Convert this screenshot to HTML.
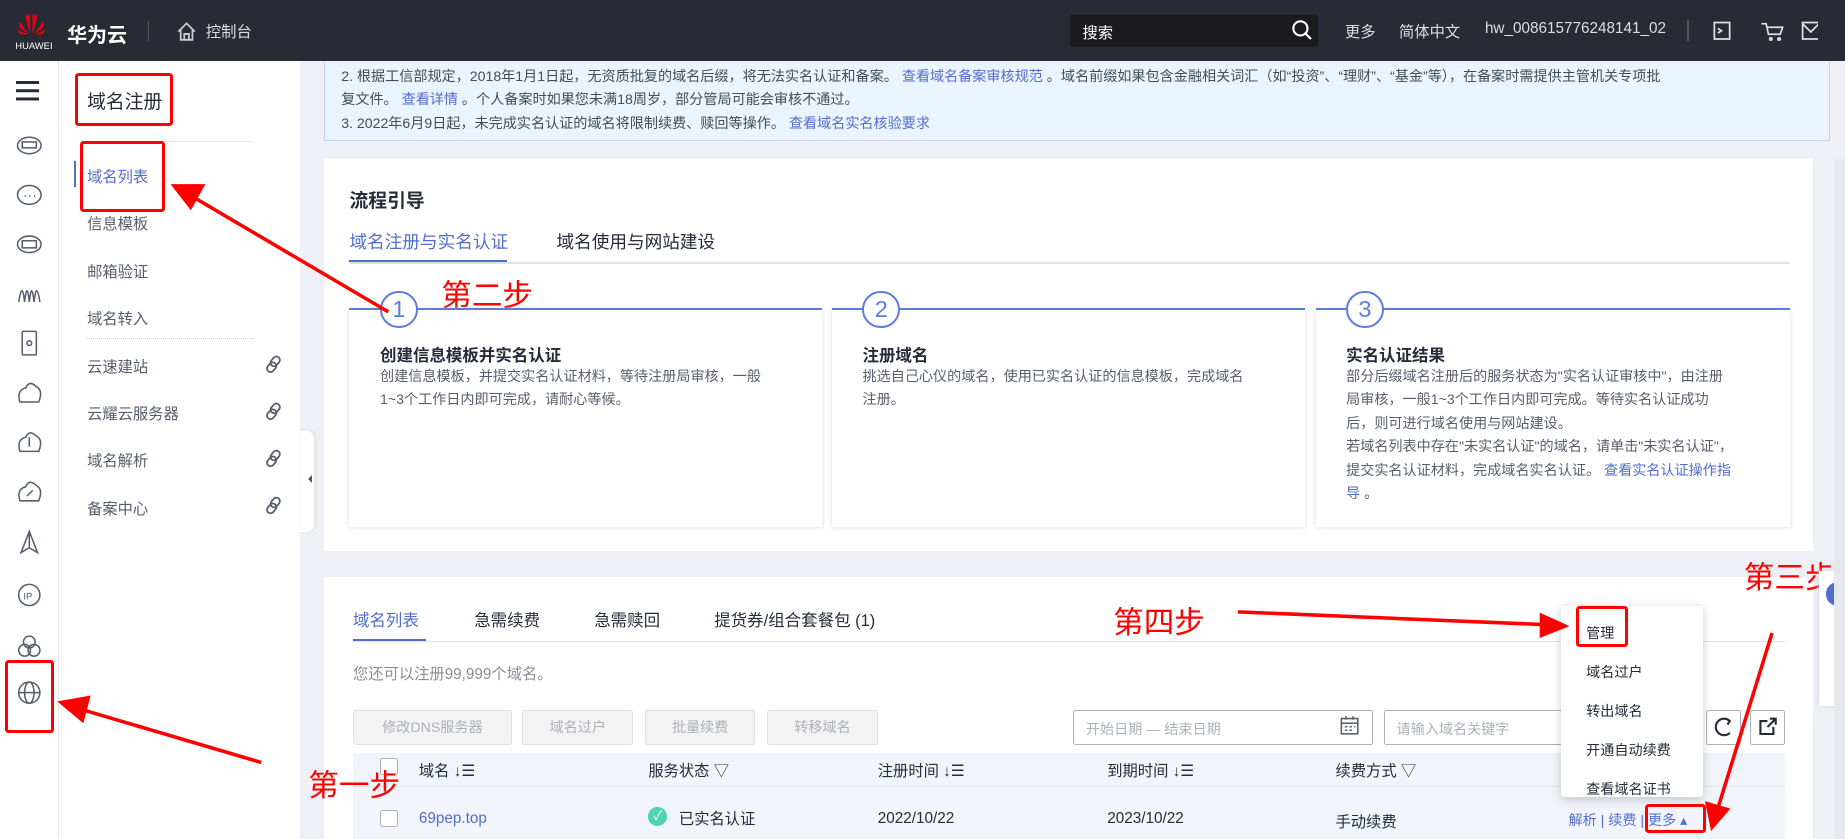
<!DOCTYPE html>
<html><head><meta charset="utf-8"><style>
*{margin:0;padding:0;box-sizing:border-box}
html,body{width:1845px;height:839px;overflow:hidden;background:#eef0f5}
#w{zoom:1.17666;position:relative;width:1568px;height:713px;font-family:"Liberation Sans","Noto Sans CJK SC",sans-serif;font-size:13px;color:#252b3a}
.a{position:absolute;white-space:nowrap}
.top{left:0;top:0;width:1568px;height:52px;background:#282b33;color:#fff}
.blue{color:#526ecc}
.g{color:#575d6c}
.red{color:#f00;font-size:26px}
.rb{border:3px solid #f00;border-radius:3px}
.btn{height:30px;border:1px solid #dfe1e6;background:#f3f3f3;color:#adb0b8;text-align:center;line-height:28px;font-size:12px;border-radius:2px}
.th{top:645px;font-size:13px;color:#252b3a}
</style></head><body><div id="w">
<div class="a top">
 <svg class="a" style="left:14px;top:10px" width="26" height="20" viewBox="0 0 26 20"><g fill="#e60012"><path d="M12 19 L8 4 Q10 1 12 3Z"/><path d="M14 19 L18 4 Q16 1 14 3Z"/><path d="M11 19 L3 8 Q2 12 4 14Z"/><path d="M15 19 L23 8 Q24 12 22 14Z"/><path d="M10 19 L1 15 Q2 18 4 19Z"/><path d="M16 19 L25 15 Q24 18 22 19Z"/></g></svg>
 <div class="a" style="left:13px;top:34px;font-size:8px">HUAWEI</div>
 <div class="a" style="left:57px;top:16px;font-size:17px;font-weight:bold">华为云</div>
 <div class="a" style="left:126px;top:18px;width:1px;height:18px;background:#555"></div>
 <svg class="a" style="left:150px;top:18px" width="18" height="18" viewBox="0 0 18 18" fill="none" stroke="#ccc" stroke-width="1.5"><path d="M2 9 L9 2 L16 9 M4 7 V16 H14 V7 M7 16 V11 H11 V16"/></svg>
 <div class="a" style="left:175px;top:17px;font-size:13px;color:#ddd">控制台</div>
 <div class="a" style="left:909px;top:13px;width:211px;height:27px;background:#1b1b1d;border-radius:2px"></div>
 <div class="a" style="left:920px;top:18px;font-size:13px">搜索</div>
 <svg class="a" style="left:1097px;top:16px" width="18" height="18" viewBox="0 0 18 18" fill="none" stroke="#fff" stroke-width="1.8"><circle cx="8" cy="8" r="6"/><path d="M12.5 12.5 L17 17"/></svg>
 <div class="a" style="left:1143px;top:17px;color:#ddd">更多</div>
 <div class="a" style="left:1189px;top:17px;color:#ddd">简体中文</div>
 <div class="a" style="left:1262px;top:17px;color:#ddd">hw_008615776248141_02</div>
 <div class="a" style="left:1434px;top:17px;width:1px;height:18px;background:#555"></div>
 <svg class="a" style="left:1455px;top:16px" width="90" height="20" fill="none" stroke="#ddd" stroke-width="1.5"><rect x="2" y="3" width="13" height="14"/><path d="M5 8 L8 10 L5 12"/><path d="M42 4 H46 L48 13 H58 L60 7 H47"/><circle cx="50" cy="17" r="1"/><circle cx="57" cy="17" r="1"/><rect x="77" y="3" width="14" height="14"/><path d="M77 4 L84 11 L91 4"/></svg>
</div>
<div class="a" style="left:0;top:52px;width:50px;height:661px;background:#fff;border-right:1px solid #e5e5e5"></div>
<div class="a" style="left:14px;top:69px;width:19px;height:2px;background:#252b3a;box-shadow:0 7px 0 #252b3a,0 14px 0 #252b3a"></div>
<svg class="a" style="left:12px;top:110px" width="26" height="520" fill="none" stroke="#575d6c" stroke-width="1.3">
<ellipse cx="13" cy="14" rx="10" ry="7"/><rect x="7" y="11" width="12" height="5"/>
<ellipse cx="13" cy="56" rx="10" ry="8"/><path d="M9 57h1M13 57h1M17 57h1"/>
<ellipse cx="13" cy="98" rx="10" ry="7"/><rect x="7" y="95" width="12" height="6"/>
<path d="M4 147 Q7 128 9 147 Q11 128 13 147 Q15 128 17 147 Q19 128 22 147"/>
<rect x="7" y="172" width="12" height="20" rx="1"/><circle cx="13" cy="182" r="2"/>
<path d="M5 232 Q2 222 10 220 Q13 213 19 219 Q25 222 21 232Z"/>
<path d="M5 274 Q2 264 10 262 Q13 255 19 261 Q25 264 21 274Z"/><path d="M13 262 V270"/>
<path d="M5 316 Q2 306 10 304 Q13 297 19 303 Q25 306 21 316Z"/><path d="M11 312 L16 307"/>
<path d="M13 342 L6 360 L13 356 L20 360Z M13 342 V356"/>
<circle cx="13" cy="396" r="9"/><text x="8" y="400" font-size="8" fill="#575d6c" stroke="none">IP</text>
<circle cx="9" cy="443" r="5"/><circle cx="17" cy="443" r="5"/><circle cx="13" cy="436" r="5"/>
<circle cx="13" cy="479" r="9"/><ellipse cx="13" cy="479" rx="4" ry="9"/><path d="M4 479 H22"/>
</svg>
<div class="a rb" style="left:4px;top:561px;width:42px;height:62px"></div>
<div class="a" style="left:50px;top:52px;width:205px;height:661px;background:#fff"></div>
<div class="a" style="left:74px;top:74px;font-size:16px">域名注册</div>
<div class="a rb" style="left:64px;top:62px;width:83px;height:45px"></div>
<div class="a" style="left:74px;top:120px;width:142px;height:1px;background:#e5e5e5"></div>
<div class="a" style="left:63px;top:137px;width:2px;height:22px;background:#526ecc"></div>
<div class="a blue" style="left:74px;top:140px">域名列表</div>
<div class="a rb" style="left:68px;top:120px;width:72px;height:60px"></div>
<div class="a g" style="left:74px;top:180px">信息模板</div>
<div class="a g" style="left:74px;top:221px">邮箱验证</div>
<div class="a g" style="left:74px;top:261px">域名转入</div>
<div class="a" style="left:74px;top:287px;width:142px;border-top:1px dotted #ccc"></div>
<div class="a g" style="left:74px;top:302px">云速建站</div>
<div class="a g" style="left:74px;top:342px">云耀云服务器</div>
<div class="a g" style="left:74px;top:382px">域名解析</div>
<div class="a g" style="left:74px;top:422px">备案中心</div>
<svg class="a" style="left:225px;top:302px" width="16" height="136" fill="none" stroke="#575d6c" stroke-width="1.5">
<g id="ch"><rect x="6" y="1" width="6" height="9" rx="3" transform="rotate(40 9 5)"/><rect x="3" y="6" width="6" height="9" rx="3" transform="rotate(40 6 10)"/></g>
<use href="#ch" y="40"/><use href="#ch" y="80"/><use href="#ch" y="120"/></svg>
<div class="a" style="left:255px;top:366px;width:12px;height:86px;background:#fff;border-radius:0 6px 6px 0;box-shadow:1px 0 3px #ddd"></div>
<div class="a" style="left:258px;top:404px;border:4px solid transparent;border-right-color:#555"></div>
<div class="a" style="left:275px;top:52px;width:1280px;height:68px;background:#eaf4fe;border:1px solid #b8d6f6;border-top:none"></div>
<div class="a g" style="left:290px;top:55px;font-size:12px;line-height:20px;color:#454b58">2. 根据工信部规定，2018年1月1日起，无资质批复的域名后缀，将无法实名认证和备案。 <span class="blue">查看域名备案审核规范</span> 。域名前缀如果包含金融相关词汇（如“投资”、“理财”、“基金”等），在备案时需提供主管机关专项批<br>复文件。 <span class="blue">查看详情</span> 。个人备案时如果您未满18周岁，部分管局可能会审核不通过。<br>3. 2022年6月9日起，未完成实名认证的域名将限制续费、赎回等操作。 <span class="blue">查看域名实名核验要求</span></div>
<div class="a" style="left:275px;top:135px;width:1266px;height:333px;background:#fff"></div>
<div class="a" style="left:297px;top:158px;font-size:16px;font-weight:bold">流程引导</div>
<div class="a blue" style="left:297px;top:195px;font-size:15px">域名注册与实名认证</div>
<div class="a" style="left:473px;top:195px;font-size:15px">域名使用与网站建设</div>
<div class="a" style="left:297px;top:223px;width:1224px;height:1px;background:#dfe1e6"></div>
<div class="a" style="left:297px;top:221px;width:134px;height:2px;background:#526ecc"></div>
<div class="a red" style="left:375px;top:230px">第二步</div>
<div class="a" style="left:297px;top:262px;width:402px;height:186px;box-shadow:0 1px 4px #ddd;border-top:2px solid #5e7ce0"></div>
<div class="a" style="left:707px;top:262px;width:402px;height:186px;box-shadow:0 1px 4px #ddd;border-top:2px solid #5e7ce0"></div>
<div class="a" style="left:1118px;top:262px;width:403px;height:186px;box-shadow:0 1px 4px #ddd;border-top:2px solid #5e7ce0"></div>
<div class="a" style="left:323px;top:247px;width:32px;height:32px;border:2px solid #5e7ce0;border-radius:50%;background:#fff;color:#5e7ce0;font-size:20px;text-align:center;line-height:28px">1</div>
<div class="a" style="left:733px;top:247px;width:32px;height:32px;border:2px solid #5e7ce0;border-radius:50%;background:#fff;color:#5e7ce0;font-size:20px;text-align:center;line-height:28px">2</div>
<div class="a" style="left:1144px;top:247px;width:32px;height:32px;border:2px solid #5e7ce0;border-radius:50%;background:#fff;color:#5e7ce0;font-size:20px;text-align:center;line-height:28px">3</div>
<div class="a" style="left:323px;top:291px;font-size:14px;font-weight:bold">创建信息模板并实名认证</div>
<div class="a g" style="left:323px;top:310px;font-size:12px;line-height:20px">创建信息模板，并提交实名认证材料，等待注册局审核，一般<br>1~3个工作日内即可完成，请耐心等候。</div>
<div class="a" style="left:733px;top:291px;font-size:14px;font-weight:bold">注册域名</div>
<div class="a g" style="left:733px;top:310px;font-size:12px;line-height:20px">挑选自己心仪的域名，使用已实名认证的信息模板，完成域名<br>注册。</div>
<div class="a" style="left:1144px;top:291px;font-size:14px;font-weight:bold">实名认证结果</div>
<div class="a g" style="left:1144px;top:310px;font-size:12px;line-height:20px">部分后缀域名注册后的服务状态为"实名认证审核中"，由注册<br>局审核，一般1~3个工作日内即可完成。等待实名认证成功<br>后，则可进行域名使用与网站建设。<br>若域名列表中存在"未实名认证"的域名，请单击"未实名认证"，<br>提交实名认证材料，完成域名实名认证。 <span class="blue">查看实名认证操作指</span><br><span class="blue">导</span> 。</div>
<div class="a" style="left:275px;top:490px;width:1266px;height:223px;background:#fff"></div>
<div class="a blue" style="left:300px;top:516px;font-size:14px">域名列表</div>
<div class="a" style="left:403px;top:516px;font-size:14px">急需续费</div>
<div class="a" style="left:505px;top:516px;font-size:14px">急需赎回</div>
<div class="a" style="left:607px;top:516px;font-size:14px">提货券/组合套餐包 (1)</div>
<div class="a" style="left:300px;top:545px;width:1217px;height:1px;background:#dfe1e6"></div>
<div class="a" style="left:300px;top:543px;width:62px;height:2px;background:#526ecc"></div>
<div class="a red" style="left:946px;top:508px">第四步</div>
<div class="a g" style="left:300px;top:563px;font-size:13px;color:#8a8e99">您还可以注册99,999个域名。</div>
<div class="a btn" style="left:300px;top:603px;width:135px">修改DNS服务器</div>
<div class="a btn" style="left:444px;top:603px;width:94px">域名过户</div>
<div class="a btn" style="left:548px;top:603px;width:94px">批量续费</div>
<div class="a btn" style="left:652px;top:603px;width:94px">转移域名</div>
<div class="a" style="left:912px;top:603px;width:255px;height:30px;border:1px solid #adb0b8;border-radius:2px;padding:7px 10px;font-size:12px;color:#adb0b8">开始日期 — 结束日期</div>
<svg class="a" style="left:1138px;top:608px" width="18" height="18" fill="none" stroke="#575d6c" stroke-width="1.3"><rect x="2" y="3" width="14" height="13"/><path d="M2 7H16M6 1V4M12 1V4M5 10h2M9 10h2M13 10h1M5 13h2M9 13h2"/></svg>
<div class="a" style="left:1176px;top:603px;width:160px;height:30px;border:1px solid #adb0b8;border-radius:2px;padding:7px 10px;font-size:12px;color:#adb0b8">请输入域名关键字</div>
<div class="a" style="left:1450px;top:603px;width:30px;height:30px;border:1px solid #adb0b8;border-radius:2px"></div>
<div class="a" style="left:1487px;top:603px;width:30px;height:30px;border:1px solid #adb0b8;border-radius:2px"></div>
<svg class="a" style="left:1454px;top:607px" width="64" height="22" fill="none" stroke="#252b3a" stroke-width="1.8"><path d="M16 6 A7 7 0 1 0 16 16 M13 4 L16 6 L14 9"/><path d="M48 6 H42 V17 H53 V11 M50 4 H55 V9 M55 4 L48 11"/></svg>
<div class="a" style="left:300px;top:640px;width:1217px;height:73px;background:#f2f4fb"></div>
<div class="a" style="left:300px;top:668px;width:1217px;height:1px;background:#e3e6ee"></div>
<div class="a" style="left:323px;top:644px;width:15px;height:15px;border:1px solid #adb0b8;background:#fff;border-radius:2px"></div>
<div class="a th" style="left:356px">域名 ↓☰</div>
<div class="a th" style="left:551px">服务状态 ▽</div>
<div class="a th" style="left:746px">注册时间 ↓☰</div>
<div class="a th" style="left:941px">到期时间 ↓☰</div>
<div class="a th" style="left:1135px">续费方式 ▽</div>
<div class="a red" style="left:262px;top:647px">第一步</div>
<div class="a" style="left:323px;top:688px;width:15px;height:15px;border:1px solid #adb0b8;background:#fff;border-radius:2px"></div>
<div class="a blue" style="left:356px;top:688px">69pep.top</div>
<div class="a" style="left:551px;top:686px;width:16px;height:16px;border-radius:50%;background:#50d4ab;color:#fff;font-size:11px;text-align:center;line-height:16px">✓</div>
<div class="a" style="left:577px;top:686px">已实名认证</div>
<div class="a" style="left:746px;top:688px">2022/10/22</div>
<div class="a" style="left:941px;top:688px">2023/10/22</div>
<div class="a" style="left:1135px;top:688px">手动续费</div>
<div class="a blue" style="left:1333px;top:688px;font-size:12px">解析 | 续费 | 更多 ▴</div>
<div class="a rb" style="left:1398px;top:683px;width:52px;height:25px"></div>
<div class="a" style="left:1327px;top:515px;width:120px;height:162px;background:#fff;box-shadow:0 2px 8px rgba(0,0,0,.2);border-radius:2px;font-size:12px;line-height:33px;padding:7px 0 0 21px">管理<br>域名过户<br>转出域名<br>开通自动续费<br>查看域名证书</div>
<div class="a rb" style="left:1339px;top:515px;width:45px;height:35px"></div>
<div class="a red" style="left:1482px;top:470px">第三步</div>
<div class="a" style="left:1546px;top:485px;width:22px;height:115px;background:#fff;box-shadow:0 0 4px #ccc"></div>
<div class="a" style="left:1552px;top:495px;width:16px;height:20px;border-radius:10px 0 0 10px;background:#526ecc"></div>
<div class="a" style="left:1559px;top:135px;width:9px;height:578px;background:#e6e8ee"></div>
<svg class="a" style="left:0;top:0" width="1568" height="713"><g stroke="#f00" stroke-width="3" fill="#f00"><line x1="330" y1="265" x2="160" y2="165"/><polygon points="148,158 172,158 162,176"/><line x1="222" y1="648" x2="66" y2="602"/><polygon points="52,597 75,593 70,612"/><line x1="1052" y1="520" x2="1316" y2="531"/><polygon points="1330,532 1310,523 1310,540"/><line x1="1506" y1="538" x2="1459" y2="690"/><polygon points="1455,703 1451,683 1468,688"/></g></svg>
</div></body></html>
